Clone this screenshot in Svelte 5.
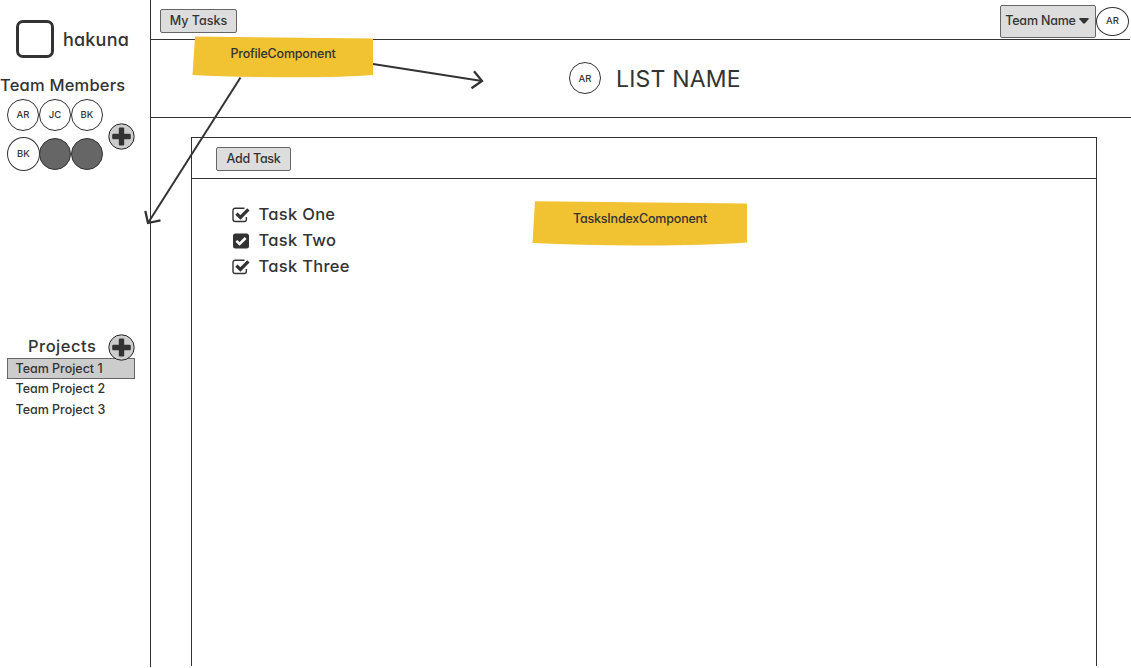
<script>
  const members = [
    { name: 'AR' }, { name: 'JC' }, { name: 'BK' },
    { name: 'BK', tall: true }, { name: '' }, { name: '' }
  ];
  const projects = ['Team Project 1', 'Team Project 2', 'Team Project 3'];
  const tasks = [
    { title: 'Task One', solid: false },
    { title: 'Task Two', solid: true },
    { title: 'Task Three', solid: false }
  ];
</script>

{#snippet plus()}
  <svg class="plus" width="28" height="28" viewBox="0 0 28 28">
    <circle cx="14.5" cy="14.5" r="12.7" fill="#ccc" stroke="#222" />
    <rect x="11.8" y="5.5" width="5.4" height="18" rx="1.2" fill="#333" />
    <rect x="5.2" y="11.8" width="18.6" height="5.4" rx="1.2" fill="#333" />
  </svg>
{/snippet}

<div class="app">
  <aside>
    <div class="brand">
      <span class="logo"></span>
      <span class="brand-name">hakuna</span>
    </div>
    <h2 class="members-title">Team Members</h2>
    <div class="team">
      <div class="avatars">
        {#each members as m}
          <span class="avatar" class:blank={!m.name} class:tall={m.tall}>{m.name}</span>
        {/each}
      </div>
      {@render plus()}
    </div>
    <div class="projects-head">
      <h2 class="projects-title">Projects</h2>
      {@render plus()}
    </div>
    <ul class="projects">
      {#each projects as p, i}
        <li class:selected={i === 0}>{p}</li>
      {/each}
    </ul>
  </aside>

  <main>
    <header class="topbar">
      <button class="my-tasks">My Tasks</button>
      <div class="account">
        <button class="team-name">Team Name
          <svg width="10" height="6" viewBox="0 0 10 6"><path d="M1 0h8q1.2.2.5 1.2L6 5.2q-1 .9-2 0L.5 1.2Q-.2.2 1 0z" fill="#333" /></svg>
        </button>
        <span class="avatar wide">AR</span>
      </div>
    </header>
    <div class="title">
      <span class="avatar">AR</span>
      <h1>LIST NAME</h1>
    </div>
    <section>
      <div class="toolbar"><button class="add">Add Task</button></div>
      <ul class="tasks">
        {#each tasks as t}
          <li>
            <svg width="18" height="16" viewBox="0 0 18 16">
              {#if t.solid}
                <rect x="1" y="0.5" width="16" height="15" rx="2.5" fill="#333" />
                <path d="M4.4 7.8l3.2 3.2 6-6" fill="none" stroke="#fff" stroke-width="2.6" />
              {:else}
                <path d="M12.5 1.2H3.2A2.2 2.2 0 0 0 1 3.4v8.9a2.2 2.2 0 0 0 2.2 2.2h9a2.2 2.2 0 0 0 2.2-2.2V10" fill="none" stroke="#333" stroke-width="1.4" />
                <path d="M4.4 6.6l4 3.8 8-8" fill="none" stroke="#333" stroke-width="3.3" />
              {/if}
            </svg>
            <span>{t.title}</span>
          </li>
        {/each}
      </ul>
    </section>
  </main>

  <svg class="arrows" width="1131" height="668" viewBox="0 0 1131 668" fill="none" stroke="#333" stroke-width="2">
    <path d="M373 64L482 81" />
    <path d="M474 71.3l8 9.7-10.5 7.2" stroke-width="2.3" />
    <path d="M240.5 77.5L148 223" />
    <path d="M145.3 211l2.7 12 12.5-2.7" stroke-width="2.3" />
  </svg>

  <div class="note profile">
    <svg viewBox="0 0 182 42"><path d="M3 .5L181 2.5V39Q150 41.5 90 41.2 40 41.3.5 39z" fill="#f1c232" /></svg>
    <span>ProfileComponent</span>
  </div>
  <div class="note index">
    <svg viewBox="0 0 216 46"><path d="M3 1.2L215 3.5V42.5Q170 45.8 105 45.5 50 45.3.5 43z" fill="#f1c232" /></svg>
    <span>TasksIndexComponent</span>
  </div>
</div>

<style>
  :global(body) { background: #fff; overflow: hidden; }
  .app {
    position: relative;
    display: grid;
    grid-template-columns: 151px 980px;
    width: 1131px;
    height: 668px;
    overflow: hidden;
    color: #333;
    font-family: Inter, sans-serif;
    font-feature-settings: "cv11", "calt" 0;
    font-size: 12.5px;
    font-weight: 500;
    white-space: nowrap;
  }
  .app *, .app { box-sizing: border-box; }
  h1, h2, ul { margin: 0; padding: 0; font-weight: 450; list-style: none; }
  svg { display: block; flex: none; }
  button {
    font: inherit;
    font-feature-settings: inherit;
    color: inherit;
    background: #ddd;
    border: 1px solid #666;
    border-radius: 2px;
    padding: 0 0 2px;
    letter-spacing: 0;
  }
  aside { border-right: 1px solid #333; height: 667px; }
  .brand { display: flex; align-items: center; height: 39px; margin: 19px 0 0 16px; }
  .logo { width: 38px; height: 38px; border: 3px solid #333; border-radius: 7px; margin-right: 9px; }
  .brand-name { font-size: 18px; font-weight: 450; letter-spacing: 0.2px; line-height: 24px; margin-top: 3px; }
  h2 { font-size: 16.5px; line-height: 22px; }
  .members-title { margin: 16px 0 0; letter-spacing: 0.2px; }
  .team { display: flex; margin: 3px 0 0 7px; align-items: center; height: 75px; }
  .team .plus { margin-top: -2px; }
  .avatars { display: grid; grid-template-columns: repeat(3, 32px); row-gap: 6px; width: 100px; align-items: center; margin-top: -4px; }
  .avatar {
    display: flex;
    align-items: center;
    justify-content: center;
    width: 32px;
    height: 32px;
    border: 1px solid #333;
    border-radius: 50%;
    font-size: 9.5px;
    font-weight: 500;
    background: #fff;
  }
  .tall { width: 33px; height: 34px; }
  .blank { background: #666; }
  .wide { width: 33px; height: 29px; }
  .projects-head { display: flex; align-items: center; margin: 159px 0 0 28px; height: 28px; }
  .projects-title { width: 79px; letter-spacing: 0.5px; margin-top: -3px; }
  .projects-head .plus { position: relative; z-index: 1; }
  .projects { margin: -3px 0 0 7px; width: 128px; font-weight: 500; }
  .projects li { height: 20.5px; line-height: 18px; padding-left: 7.5px; border: 1px solid transparent; letter-spacing: -0.02px; }
  .projects .selected { background: #ccc; border-color: #666; height: 21px; line-height: 19px; }

  main { display: flex; flex-direction: column; }
  .topbar { display: flex; justify-content: space-between; align-items: flex-start; height: 40px; border-bottom: 1px solid #333; padding-left: 9px; width: 979px; }
  .my-tasks { width: 77px; height: 24px; margin-top: 9px; }
  .account { display: flex; align-items: center; margin-top: 5px; padding-right: 1px; }
  .account .avatar { margin-top: -1px; padding-bottom: 1px; }
  .team-name { display: flex; align-items: center; justify-content: center; gap: 3px; width: 96px; height: 33px; padding: 0 2px 2px 0; letter-spacing: -0.2px; }
  .title { display: flex; align-items: center; justify-content: flex-start; height: 78px; border-bottom: 1px solid #333; padding-left: 418px; gap: 15px; }
  .title .avatar { margin-top: -1px; }
  h1 { font-size: 23px; font-weight: 400; line-height: 30px; letter-spacing: 0.2px; margin-top: 1px; }
  section { margin: 19px 0 2px 40px; width: 906px; flex: 1; border: 1px solid #333; border-bottom: 0; }
  .toolbar { height: 41px; border-bottom: 1px solid #333; padding: 9px 0 0 24px; }
  .add { display: block; width: 75px; height: 24px; letter-spacing: -0.25px; }
  .tasks { padding: 22px 0 0 40px; }
  .tasks li { display: flex; align-items: center; gap: 8.5px; height: 26px; font-size: 16.5px; letter-spacing: 0.3px; font-weight: 450; }
  .tasks svg { margin-top: 2px; }

  .arrows { position: absolute; left: 0; top: 0; }
  .note { position: absolute; text-align: center; }
  .note svg { width: 100%; height: 100%; }
  .note span { position: absolute; left: 0; right: 0; top: 10px; line-height: 16px; letter-spacing: -0.2px; }
  .profile { left: 192px; top: 36px; width: 182px; height: 42px; }
  .index { left: 532px; top: 200px; width: 216px; height: 46px; }
  .index span { top: 11px; }
</style>
